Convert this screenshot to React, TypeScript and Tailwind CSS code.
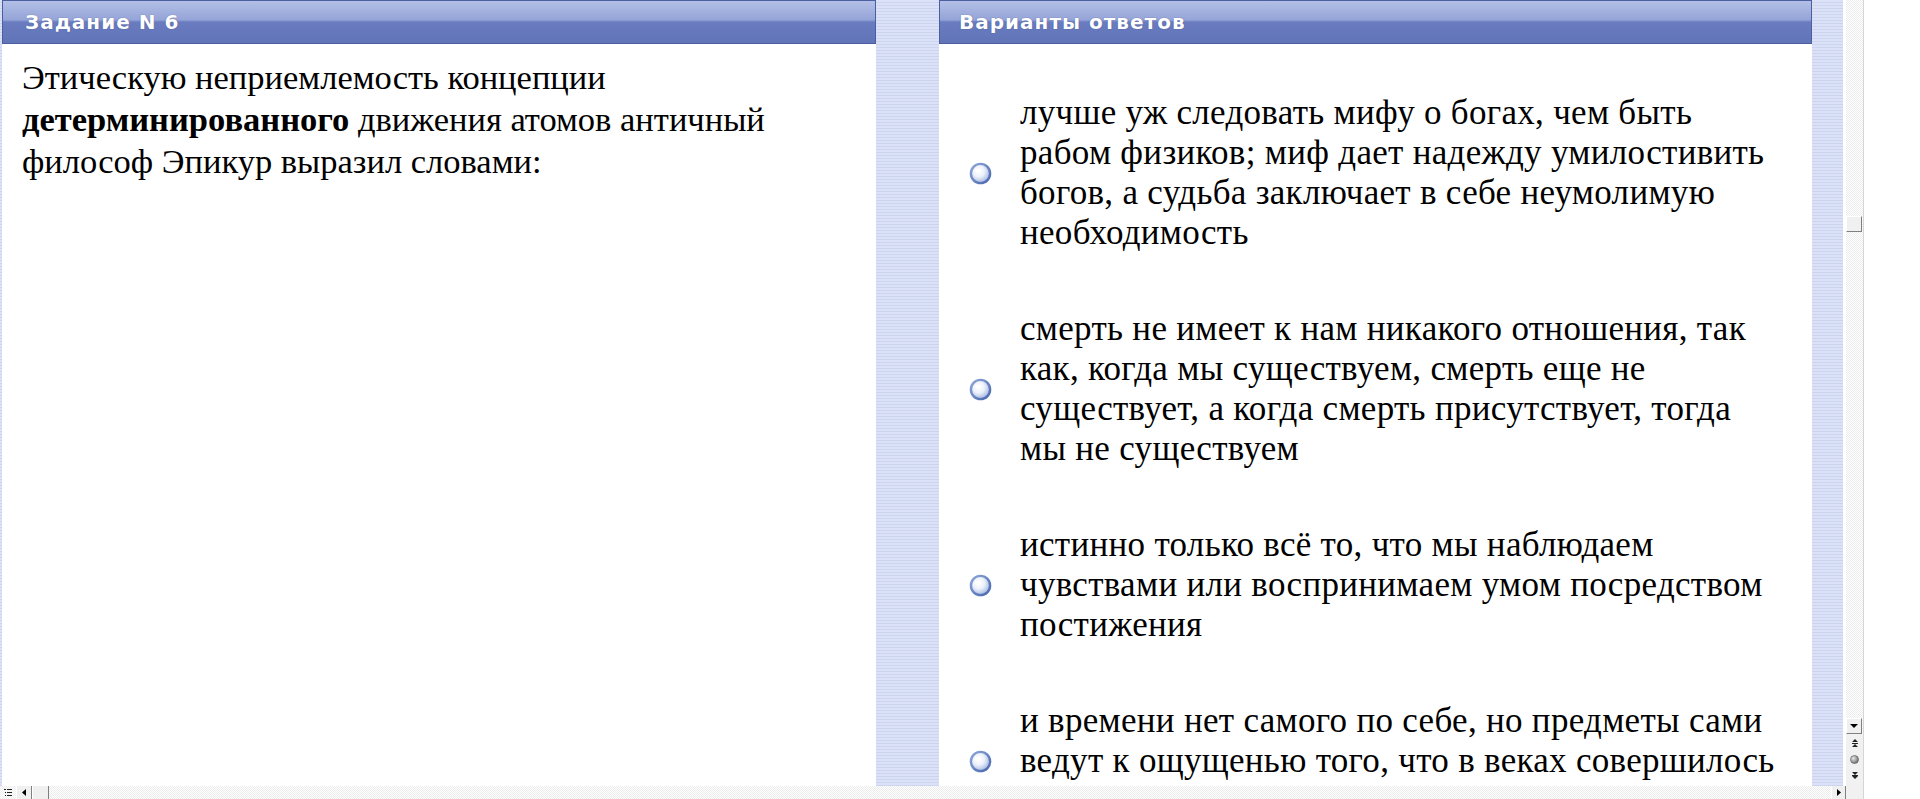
import React from "react";

const question = [
  <>Этическую неприемлемость концепции</>,
  <>
    <b>детерминированного</b> движения атомов античный
  </>,
  <>философ Эпикур выразил словами:</>,
];

const answers: string[][] = [
  [
    "лучше уж следовать мифу о богах, чем быть",
    "рабом физиков; миф дает надежду умилостивить",
    "богов, а судьба заключает в себе неумолимую",
    "необходимость",
  ],
  [
    "смерть не имеет к нам никакого отношения, так",
    "как, когда мы существуем, смерть еще не",
    "существует, а когда смерть присутствует, тогда",
    "мы не существуем",
  ],
  [
    "истинно только всё то, что мы наблюдаем",
    "чувствами или воспринимаем умом посредством",
    "постижения",
  ],
  [
    "и времени нет самого по себе, но предметы сами",
    "ведут к ощущенью того, что в веках совершилось",
    "что происходит теперь и что воспоследует позже",
  ],
];

const stripes =
  "bg-[repeating-linear-gradient(180deg,#dbe1f6_0px,#dbe1f6_2px,#ccd4ef_2px,#ccd4ef_3px)]";

function PanelHeader({ title, pad }: { title: string; pad: string }) {
  return (
    <div
      className={`h-[44px] shrink-0 border border-[#4a5f9f] bg-[linear-gradient(180deg,#b3bfe6_0%,#95a4d8_45%,#6a7cbf_50%,#6174b8_100%)] flex items-center ${pad}`}
    >
      <span className="text-white text-[20px] font-bold tracking-[1px] font-['DejaVu_Sans',sans-serif] [text-shadow:0_0_1px_rgba(40,50,110,0.7)]">
        {title}
      </span>
    </div>
  );
}

function Radio() {
  return (
    <svg width="23" height="23" viewBox="0 0 23 23" className="shrink-0">
      <defs>
        <radialGradient id="rb" cx="0.4" cy="0.38" r="0.65">
          <stop offset="0" stopColor="#ffffff" />
          <stop offset="0.45" stopColor="#eef2fb" />
          <stop offset="1" stopColor="#9fb3e0" />
        </radialGradient>
        <linearGradient id="ring" x1="0" y1="0" x2="1" y2="1">
          <stop offset="0" stopColor="#8ea6da" />
          <stop offset="1" stopColor="#4866ad" />
        </linearGradient>
      </defs>
      <circle cx="11.5" cy="11.5" r="9.6" fill="url(#rb)" stroke="url(#ring)" strokeWidth="2.4" />
      <ellipse cx="9" cy="8.5" rx="3" ry="2" fill="#ffffff" />
    </svg>
  );
}

function Answer({ lines }: { lines: string[] }) {
  return (
    <div className="flex items-center">
      <div className="w-[81px] shrink-0 pl-[30px]">
        <Radio />
      </div>
      <div className="leading-[40px]">
        {lines.map((l, i) => (
          <div key={i} className="whitespace-nowrap">
            {l}
          </div>
        ))}
      </div>
    </div>
  );
}

function VScroll() {
  return (
    <div className="w-[18px] h-full flex flex-col border-r border-[#d6d6d6] bg-[repeating-conic-gradient(#ffffff_0_25%,#ececec_0_50%)] bg-[length:2px_2px]">
      <div className="h-[216px]" />
      <div className="h-[16px] w-[16px] bg-[#f0f0f0] border border-t-white border-l-white border-r-[#808080] border-b-[#808080]" />
      <div className="flex-1" />
      <div className="h-[16px] w-[16px] bg-[#f0f0f0] border border-t-white border-l-white border-r-[#808080] border-b-[#808080] flex items-center justify-center">
        <svg width="8" height="5" viewBox="0 0 8 5">
          <path d="M0 0h8L4 4z" fill="#000" />
        </svg>
      </div>
      <div className="h-[65px] bg-[#f1f1f1] flex flex-col items-center pt-[5px] gap-[7px]">
        <svg width="8" height="9" viewBox="0 0 8 9">
          <path d="M4 0L7 3H1z M1 4h6v1H1z M4 5L7 8H1z" fill="#222" />
        </svg>
        <svg width="9" height="9" viewBox="0 0 9 9">
          <defs>
            <radialGradient id="dot" cx="0.35" cy="0.35" r="0.7">
              <stop offset="0" stopColor="#e8e8e8" />
              <stop offset="1" stopColor="#6d6d6d" />
            </radialGradient>
          </defs>
          <circle cx="4.5" cy="4.5" r="4" fill="url(#dot)" stroke="#555" strokeWidth="0.6" />
        </svg>
        <svg width="8" height="9" viewBox="0 0 8 9">
          <path d="M1 1h6L4 4z M1 4h6v1H1z M1 5h6L4 8z" fill="#222" />
        </svg>
      </div>
    </div>
  );
}

function HScroll() {
  return (
    <div className="h-[13px] shrink-0 flex items-stretch bg-[repeating-conic-gradient(#ffffff_0_25%,#ececec_0_50%)] bg-[length:2px_2px]">
      <div className="w-[16px] flex items-center justify-center">
        <svg width="8" height="7" viewBox="0 0 8 7">
          <path d="M0 0h2v1H0z M3 0h5v1H3z M1 3h1v1H1z M3 3h5v1H3z M1 6h1v1H1z M3 6h5v1H3z" fill="#222" />
        </svg>
      </div>
      <div className="w-[16px] bg-[#f0f0f0] border-l border-white border-r border-r-[#808080] flex items-center justify-center">
        <svg width="4" height="7" viewBox="0 0 4 7">
          <path d="M4 0v7L0 3.5z" fill="#000" />
        </svg>
      </div>
      <div className="w-[17px] bg-[#f0f0f0] border-l border-white border-r border-r-[#808080]" />
      <div className="flex-1" />
      <div className="w-[15px] bg-[#f0f0f0] border-l border-white border-r border-r-[#808080] flex items-center justify-center">
        <svg width="4" height="7" viewBox="0 0 4 7">
          <path d="M0 0v7L4 3.5z" fill="#000" />
        </svg>
      </div>
    </div>
  );
}

export default function App() {
  return (
    <div className="w-[1920px] h-[799px] flex bg-white overflow-hidden font-['Liberation_Serif',serif] text-black">
      <div className="w-[1846px] h-full flex flex-col">
        <div className={`flex-1 min-h-0 flex pl-[2px] ${stripes}`}>
          <section className="w-[874px] h-full flex flex-col bg-white">
            <PanelHeader title="Задание N 6" pad="px-[22px]" />
            <div className="pt-[12px] pl-[20px] text-[34.5px] leading-[42px]">
              {question.map((l, i) => (
                <div key={i} className="whitespace-nowrap">
                  {l}
                </div>
              ))}
            </div>
          </section>
          <div className="w-[63px]" />
          <section className="w-[873px] h-full flex flex-col bg-white overflow-hidden">
            <PanelHeader title="Варианты ответов" pad="px-[19px]" />
            <div className="pt-[49px] flex flex-col gap-[56px] text-[35px] tracking-[0.3px]">
              {answers.map((a, i) => (
                <Answer key={i} lines={a} />
              ))}
            </div>
          </section>
          <div className="w-[31px]" />
          <div className="flex-1 bg-white" />
        </div>
        <HScroll />
      </div>
      <VScroll />
      <div className="flex-1 bg-white" />
    </div>
  );
}
